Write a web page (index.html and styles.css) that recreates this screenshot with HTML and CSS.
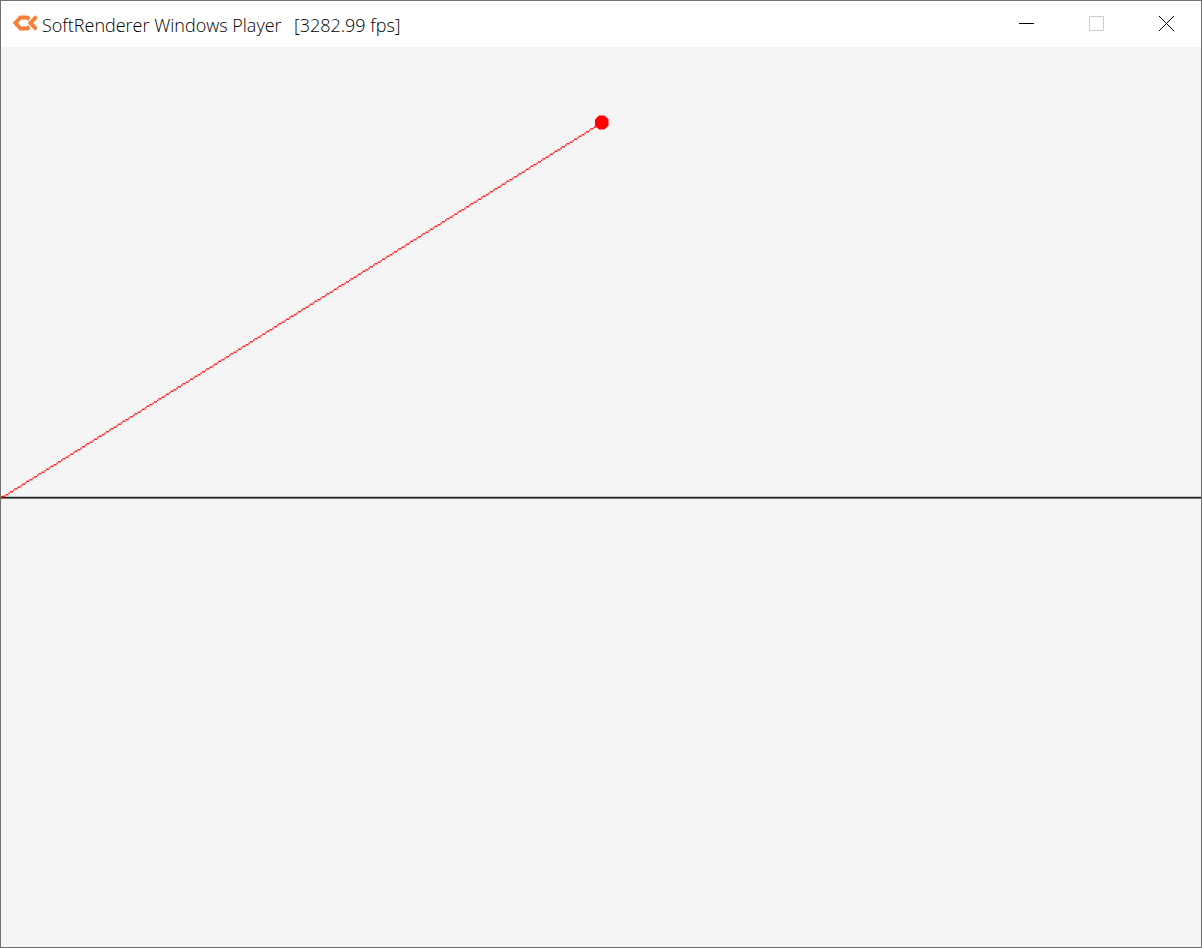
FILE: index.html
```html
<!DOCTYPE html>
<html lang="en">
<head>
<meta charset="utf-8">
<title>SoftRenderer Windows Player</title>
<link rel="stylesheet" href="styles.css">
</head>
<body>
<div class="window">
  <header class="titlebar">
    <svg class="logo" viewBox="0 0 24 16" aria-hidden="true">
      <path d="M16.500 4 14 2.500H7.500L2.500 8 7.500 13.500H14L16.500 12"/>
      <path d="M23.500 1.500 17.500 8 23.500 14.500"/>
    </svg>
    <h1 class="title">SoftRenderer Windows Player&nbsp; <span class="fps">[3282.99 fps]</span></h1>
    <div class="controls">
      <button class="control" type="button" aria-label="Minimize">
        <svg class="glyph" viewBox="0 0 15 15"><path d="M0 7.500H15"/></svg>
      </button>
      <button class="control" type="button" aria-label="Maximize" disabled>
        <svg class="glyph" viewBox="0 0 15 15"><path d="M.5.5H14.500V14.500H.5Z"/></svg>
      </button>
      <button class="control" type="button" aria-label="Close">
        <svg class="glyph" viewBox="0 0 15 15"><path d="M0 0 15 15M15 0 0 15"/></svg>
      </button>
    </div>
  </header>
  <main class="viewport">
    <svg class="scene" viewBox="0 0 1200 900" role="img" aria-label="Red vector above a horizontal axis">
      <path class="axis-soft" d="M0 449.500H1200"/>
      <path class="axis-shade" d="M0 451.500H1200"/>
      <path class="axis" d="M0 450.500H1200"/>
      <path class="vector" id="vector"/>
      <path class="point" d="M598 68.500H603.500L607.500 72.500V78.500L603.500 82.500H598L594 78.500V72.500Z"/>
      <path class="origin" d="M0 449.500H3V451H0Z"/>
    </svg>
  </main>
</div>
<script src="scene.js"></script>
</body>
</html>
```
FILE: scene.js
```js
// Rasterise the vector into square cells, one per column.
const CELL = 1.5;
const from = { x: 0, y: 300 };
const to = { x: 400, y: 50 };
const slope = (to.y - from.y) / (to.x - from.x);

let d = "";
for (let x = from.x; x <= to.x; x++) {
  const y = Math.round(from.y + (x - from.x) * slope);
  d += `M${x * CELL} ${y * CELL}h${CELL}v${CELL}h-${CELL}z`;
}
document.getElementById("vector").setAttribute("d", d);
```
FILE: styles.css
```css
* {
  box-sizing: border-box;
}

body {
  margin: 0;
}

.window {
  display: flex;
  flex-direction: column;
  height: 100vh;
  border: 1px solid #707070;
  background: #f5f5f5;
  overflow: hidden;
}

.titlebar {
  display: flex;
  flex: none;
  align-items: center;
  height: 46px;
  padding: 0 0 2px 12px;
  background: #fff;
}

.logo {
  flex: none;
  width: 24px;
  height: 16px;
  margin-right: 5px;
  fill: none;
  stroke: #f58039;
  stroke-width: 4;
}

.title {
  flex: 1;
  margin: 0;
  padding-top: 3px;
  font: 300 18px/24px "Open Sans", "Noto Sans CJK KR", sans-serif;
  color: #000;
  white-space: nowrap;
}

.fps {
  margin-left: 3px;
}

.controls {
  display: flex;
  align-self: stretch;
}

.control {
  display: grid;
  place-items: center;
  width: 70px;
  padding: 0;
  border: 0;
  background: transparent;
}

.glyph {
  width: 15px;
  height: 15px;
  fill: none;
  stroke: #000;
  stroke-width: 1;
}

.control:disabled .glyph {
  stroke: #ccc;
}

.viewport {
  flex: 1;
  min-height: 0;
}

.scene {
  display: block;
  width: 100%;
  height: 100%;
}

.axis {
  stroke: #1e1e1e;
}

.axis-soft {
  stroke: #c4c4c4;
}

.axis-shade {
  stroke: #777;
}

.vector {
  fill: #ff2626;
}

.point {
  fill: #f00;
}

.origin {
  fill: #b00000;
}
```
